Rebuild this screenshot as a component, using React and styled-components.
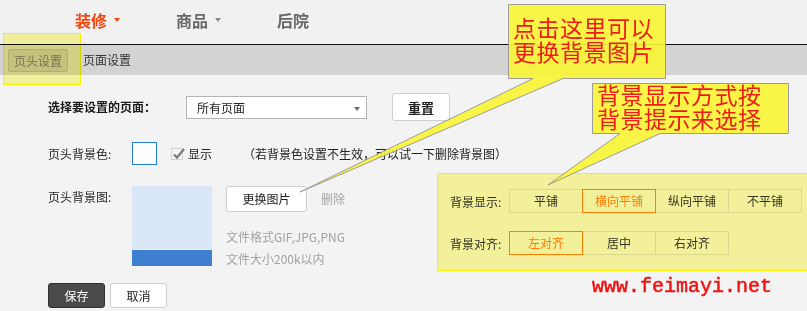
import React from "react";
import styled, { createGlobalStyle } from "styled-components";

const GlobalStyle = createGlobalStyle`
  html, body { margin: 0; padding: 0; background: #f3f3f3; }
  body {
    font-family: "Noto Sans CJK SC", "Microsoft YaHei", sans-serif;
    font-size: 12px;
    color: #333;
  }
  * { box-sizing: border-box; }
`;

const Page = styled.div`
  position: relative;
  width: 807px;
  height: 311px;
  overflow: hidden;
  background: #f3f3f3;
`;

/* ---------- top navigation ---------- */
const NavBar = styled.nav`
  display: flex;
  align-items: center;
  gap: 56px;
  height: 45px;
  padding: 0 0 5px 75px;
  background: #f1f1f1;
  border-bottom: 1px solid #111;
`;

const NavItem = styled.div`
  display: flex;
  align-items: center;
  gap: 7px;
  font-size: 16px;
  font-weight: bold;
  line-height: 20px;
  color: ${(p) => (p.$active ? "#f2470f" : "#686868")};
`;

const Caret = styled.span`
  width: 0;
  height: 0;
  border-left: 3px solid transparent;
  border-right: 3px solid transparent;
  border-top: 4px solid ${(p) => (p.$active ? "#f2470f" : "#8a8a8a")};
`;

/* ---------- sub navigation ---------- */
const SubNav = styled.div`
  display: flex;
  align-items: center;
  gap: 15px;
  height: 30px;
  padding-left: 8px;
  background: #d3d3d3;
`;

const Tab = styled.div`
  position: relative;
  height: 23px;
  line-height: 21px;
  padding: ${(p) => (p.$active ? "0 5px" : "0")};
  border: ${(p) => (p.$active ? "1px solid #b0b0b0" : "none")};
  border-radius: 2px;
  background: ${(p) => (p.$active ? "#c4c4c4" : "transparent")};
  color: ${(p) => (p.$active ? "#777" : "#333")};
  font-size: 12px;
`;

const Highlight = styled.div`
  position: absolute;
  left: ${(p) => p.$left}px;
  top: ${(p) => p.$top}px;
  width: ${(p) => p.$w}px;
  height: ${(p) => p.$h}px;
  border: 1px solid #ffff00;
  background: #fffca4;
  mix-blend-mode: multiply;
  pointer-events: none;
  z-index: 2;
`;

/* ---------- main form ---------- */
const Main = styled.main`
  padding: 18px 0 0 48px;
`;

const FormRow = styled.div`
  display: flex;
  align-items: ${(p) => (p.$top ? "flex-start" : "center")};
  margin-bottom: ${(p) => p.$gap || 0}px;
`;

const Label = styled.div`
  width: ${(p) => p.$w}px;
  flex: none;
  line-height: 22px;
  font-weight: ${(p) => (p.$bold ? "bold" : "normal")};
  color: ${(p) => (p.$bold ? "#1a1a1a" : "#2a2a2a")};
`;

const Select = styled.div`
  position: relative;
  width: 181px;
  height: 23px;
  line-height: 21px;
  padding-left: 10px;
  border: 1px solid #b3b3b3;
  background: #fff;
  color: #222;

  &::after {
    content: "";
    position: absolute;
    right: 6px;
    top: 10px;
    border-left: 3px solid transparent;
    border-right: 3px solid transparent;
    border-top: 4px solid #6a6a6a;
  }
`;

const Button = styled.button`
  flex: none;
  width: ${(p) => p.$w}px;
  height: ${(p) => p.$h}px;
  margin-left: ${(p) => p.$ml || 0}px;
  padding: 0;
  border: 1px solid ${(p) => (p.$dark ? "#2f2f2f" : "#cfcfcf")};
  border-radius: 3px;
  background: ${(p) => (p.$dark ? "#4a4a4a" : "#fff")};
  color: ${(p) => (p.$dark ? "#fff" : "#222")};
  font-family: inherit;
  font-size: ${(p) => (p.$bold ? 13 : 12)}px;
  font-weight: ${(p) => (p.$bold ? "bold" : "normal")};
  line-height: 1;
`;

const Swatch = styled.div`
  width: 25px;
  height: 23px;
  border: 1px solid #1d7fda;
  background: #fff;
`;

const CheckBox = styled.span`
  position: relative;
  display: inline-block;
  width: 12px;
  height: 12px;
  margin-left: 14px;
  border: 1px solid #d2d2d2;
  background: #f5f5f5;

  svg {
    position: absolute;
    left: 0px;
    top: -2px;
  }
`;

const Text = styled.span`
  margin-left: ${(p) => p.$ml || 0}px;
  color: ${(p) => p.$color || "#222"};
  line-height: 22px;
`;

const Thumb = styled.div`
  flex: none;
  width: 80px;
  height: 80px;
  background: linear-gradient(
    to bottom,
    #d8e6f8 0,
    #d8e6f8 63px,
    #eaf1fb 63px,
    #eaf1fb 64px,
    #3e7fcf 64px
  );
`;

const FileCol = styled.div`
  flex: none;
  width: 130px;
  margin-left: 14px;
`;

const FileActions = styled.div`
  display: flex;
  align-items: center;
`;

const FileNotes = styled.div`
  margin-top: 14px;
  color: #a2a2a2;
  line-height: 22px;
`;

const Options = styled.div`
  position: relative;
  margin: 3px 0 0 94px;
`;

const OptionRow = styled.div`
  display: flex;
  align-items: center;
  margin-top: ${(p) => p.$mt || 0}px;
`;

const OptionLabel = styled.div`
  width: 59px;
  color: #333;
`;

const Segments = styled.div`
  display: flex;
`;

const Segment = styled.div`
  position: relative;
  z-index: ${(p) => (p.$active ? 1 : 0)};
  width: 74px;
  height: 24px;
  line-height: 22px;
  text-align: center;
  border: 1px solid ${(p) => (p.$active ? "#ff7e00" : "#dcdcdc")};
  color: ${(p) => (p.$active ? "#ff7e00" : "#333")};
  & + & { margin-left: -1px; }
`;

/* ---------- annotations ---------- */
const AnnotationLayer = styled.div`
  position: absolute;
  inset: 0;
  z-index: 5;
  pointer-events: none;

  svg { position: absolute; left: 0; top: 0; }
`;

const CalloutText = styled.div`
  position: absolute;
  left: ${(p) => p.$left}px;
  top: ${(p) => p.$top}px;
  font-size: 23px;
  line-height: 24px;
  letter-spacing: 0.5px;
  color: #ee1b1b;
  white-space: nowrap;
`;

const Watermark = styled.div`
  position: absolute;
  left: 592px;
  top: 277px;
  font-family: "Liberation Mono", monospace;
  font-size: 20px;
  line-height: 20px;
  color: #ee1212;
  -webkit-text-stroke: 0.5px #ee1212;
  z-index: 5;
`;

const calloutFill = "rgba(249, 245, 52, 0.9)";

export default function App() {
  return (
    <Page>
      <GlobalStyle />
      <NavBar>
        <NavItem $active>
          装修<Caret $active />
        </NavItem>
        <NavItem>
          商品<Caret />
        </NavItem>
        <NavItem>后院</NavItem>
      </NavBar>

      <SubNav>
        <Tab $active>
          页头设置
          <Highlight $left={-6} $top={-17} $w={78} $h={52} />
        </Tab>
        <Tab>页面设置</Tab>
      </SubNav>

      <Main>
        <FormRow $gap={21}>
          <Label $w={138} $bold>选择要设置的页面：</Label>
          <Select>所有页面</Select>
          <Button $w={58} $h={28} $ml={25} $bold>
            重置
          </Button>
        </FormRow>

        <FormRow $gap={21}>
          <Label $w={84}>页头背景色:</Label>
          <Swatch />
          <CheckBox>
            <svg width="14" height="14" viewBox="0 0 14 14">
              <polyline
                points="2,7.5 5,10.5 12,2"
                fill="none"
                stroke="#7a7a7a"
                strokeWidth="2.2"
              />
            </svg>
          </CheckBox>
          <Text $ml={5}>显示</Text>
          <Text $ml={31}>（若背景色设置不生效，可以试一下删除背景图）</Text>
        </FormRow>

        <FormRow $top $gap={13}>
          <Label $w={84}>页头背景图:</Label>
          <Thumb />
          <FileCol>
            <FileActions>
              <Button $w={81} $h={26}>
                更换图片
              </Button>
              <Text $ml={14} $color="#a5a5a5">
                删除
              </Text>
            </FileActions>
            <FileNotes>
              文件格式GIF,JPG,PNG
              <br />
              文件大小200k以内
            </FileNotes>
          </FileCol>
          <Options>
            <OptionRow>
              <OptionLabel>背景显示:</OptionLabel>
              <Segments>
                <Segment>平铺</Segment>
                <Segment $active>横向平铺</Segment>
                <Segment>纵向平铺</Segment>
                <Segment>不平铺</Segment>
              </Segments>
            </OptionRow>
            <OptionRow $mt={18}>
              <OptionLabel>背景对齐:</OptionLabel>
              <Segments>
                <Segment $active>左对齐</Segment>
                <Segment>居中</Segment>
                <Segment>右对齐</Segment>
              </Segments>
            </OptionRow>
            <Highlight $left={-13} $top={-16} $w={374} $h={98} />
          </Options>
        </FormRow>

        <FormRow>
          <Button $w={57} $h={25} $dark>
            保存
          </Button>
          <Button $w={57} $h={25} $ml={5}>
            取消
          </Button>
        </FormRow>
      </Main>

      <AnnotationLayer>
        <svg width="807" height="311" viewBox="0 0 807 311">
          <path
            d="M508.5 4.5 H665.5 V78.5 H563 L300 192 L533 78.5 H508.5 Z"
            fill={calloutFill}
            stroke="#9c9c9c"
            strokeWidth="1"
          />
          <path
            d="M592.5 83.5 H788.5 V133.5 H660 L548 185 L620 133.5 H592.5 Z"
            fill={calloutFill}
            stroke="#9c9c9c"
            strokeWidth="1"
          />
        </svg>
        <CalloutText $left={513} $top={15}>
          点击这里可以
          <br />
          更换背景图片
        </CalloutText>
        <CalloutText $left={597} $top={82}>
          背景显示方式按
          <br />
          背景提示来选择
        </CalloutText>
      </AnnotationLayer>

      <Watermark>www.feimayi.net</Watermark>
    </Page>
  );
}
